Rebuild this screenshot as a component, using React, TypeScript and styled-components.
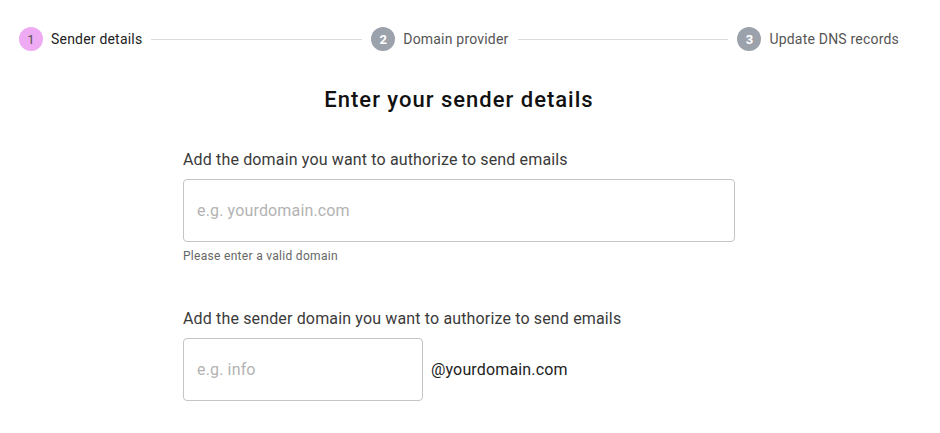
import React from "react";
import styled, { createGlobalStyle } from "styled-components";

const Global = createGlobalStyle`
  html, body { margin: 0; padding: 0; background: #fff; }
  body { font-family: Roboto, "Noto Sans", Arial, sans-serif; color: #222; }
  * { box-sizing: border-box; }
`;

const Page = styled.div`
  width: 940px;
  height: 433px;
  background: #fff;
  overflow: hidden;
`;

const Stepper = styled.div`
  display: flex;
  align-items: center;
  padding: 27px 41px 0 19px;
  height: 51px;
`;

const Step = styled.div`
  display: flex;
  align-items: center;
  gap: 8px;
  flex: none;
`;

const Circle = styled.div<{ $active?: boolean }>`
  width: 24px;
  height: 24px;
  border-radius: 50%;
  display: flex;
  align-items: center;
  justify-content: center;
  font-size: 13px;
  font-weight: ${(p) => (p.$active ? 400 : 700)};
  background: ${(p) => (p.$active ? "#eeaaf2" : "#9ca2ab")};
  color: ${(p) => (p.$active ? "#555" : "#fff")};
`;

const StepLabel = styled.span<{ $active?: boolean }>`
  font-size: 14px;
  letter-spacing: 0.2px;
  color: ${(p) => (p.$active ? "#222" : "#555")};
  white-space: nowrap;
`;

const Line = styled.div`
  flex: 1;
  height: 1px;
  background: #dcdcdc;
  margin: 0 9px;
`;

const Form = styled.div`
  width: 552px;
  margin: 0 0 0 183px;
  display: flex;
  flex-direction: column;
`;

const Title = styled.h1`
  margin: 37px 0 0;
  font-size: 22px;
  font-weight: 500;
  letter-spacing: 1px;
  color: #111;
  text-align: center;
  line-height: 24px;
`;

const Label = styled.label<{ $top: number }>`
  display: block;
  margin-top: ${(p) => p.$top}px;
  font-size: 16px;
  letter-spacing: 0.15px;
  color: #3a3a3a;
  line-height: 20px;
`;

const Row = styled.div<{ $top: number }>`
  display: flex;
  align-items: center;
  gap: 8px;
  margin-top: ${(p) => p.$top}px;
`;

const Input = styled.input<{ $w: string }>`
  width: ${(p) => p.$w};
  height: 63px;
  border: 1px solid #c4c4c4;
  border-radius: 4px;
  padding: 0 13px;
  font-family: Roboto, "Noto Sans", Arial, sans-serif;
  font-size: 16px;
  letter-spacing: 0.15px;
  color: #222;
  outline: none;
  &::placeholder { color: #b3b3b3; }
`;

const Helper = styled.div`
  margin-top: 6px;
  font-size: 12px;
  letter-spacing: 0.3px;
  color: #666;
  line-height: 16px;
`;

const Suffix = styled.span`
  font-size: 16px;
  letter-spacing: 0.15px;
  color: #222;
`;

const steps = ["Sender details", "Domain provider", "Update DNS records"];

export default function App() {
  return (
    <Page>
      <Global />
      <Stepper>
        {steps.map((s, i) => (
          <React.Fragment key={s}>
            {i > 0 && <Line />}
            <Step>
              <Circle $active={i === 0}>{i + 1}</Circle>
              <StepLabel $active={i === 0}>{s}</StepLabel>
            </Step>
          </React.Fragment>
        ))}
      </Stepper>
      <Form>
        <Title>Enter your sender details</Title>
        <Label $top={38}>Add the domain you want to authorize to send emails</Label>
        <Row $top={9}>
          <Input $w="100%" placeholder="e.g. yourdomain.com" />
        </Row>
        <Helper>Please enter a valid domain</Helper>
        <Label $top={45}>Add the sender domain you want to authorize to send emails</Label>
        <Row $top={9}>
          <Input $w="240px" placeholder="e.g. info" />
          <Suffix>@yourdomain.com</Suffix>
        </Row>
      </Form>
    </Page>
  );
}
